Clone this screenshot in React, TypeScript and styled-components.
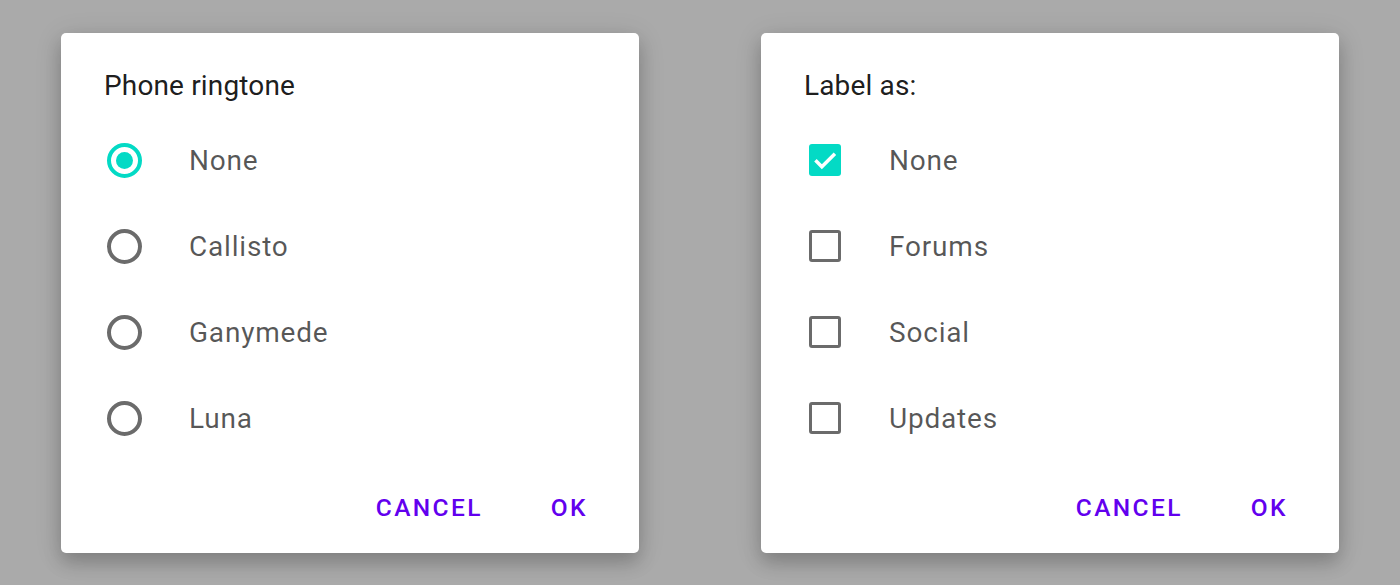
import React from "react";
import styled, { createGlobalStyle } from "styled-components";

const Global = createGlobalStyle`
  html, body { margin: 0; padding: 0; background: #aaaaaa; }
  body { font-family: Roboto, "Noto Sans", sans-serif; }
`;

const Page = styled.div`
  display: flex;
  gap: 122px;
  padding: 33px 61px;
  height: 585px;
  box-sizing: border-box;
`;

const Dialog = styled.div`
  width: 578px;
  height: 520px;
  box-sizing: border-box;
  background: #ffffff;
  border-radius: 5px;
  box-shadow: 0 10px 18px rgba(0, 0, 0, 0.18), 0 4px 28px rgba(0, 0, 0, 0.12);
  display: flex;
  flex-direction: column;
  padding: 36px 0 0 0;
`;

const Title = styled.div`
  font-size: 28px;
  line-height: 34px;
  color: rgba(0, 0, 0, 0.9);
  padding-left: 43px;
  letter-spacing: 0.15px;
`;

const List = styled.div`
  display: flex;
  flex-direction: column;
  margin-top: 14px;
`;

const Row = styled.div`
  display: flex;
  align-items: center;
  height: 86px;
`;

const Control = styled.div`
  width: 128px;
  display: flex;
  align-items: center;
  padding-left: 46px;
  box-sizing: border-box;
`;

const Radio = styled.div<{ $checked?: boolean }>`
  width: 35px;
  height: 35px;
  box-sizing: border-box;
  border-radius: 50%;
  border: 4px solid ${(p) => (p.$checked ? "#03dac5" : "#6b6b6b")};
  display: flex;
  align-items: center;
  justify-content: center;
  &::after {
    content: "";
    display: ${(p) => (p.$checked ? "block" : "none")};
    width: 17px;
    height: 17px;
    border-radius: 50%;
    background: #03dac5;
  }
`;

const Box = styled.div<{ $checked?: boolean }>`
  width: 32px;
  height: 32px;
  margin-left: 2px;
  box-sizing: border-box;
  border-radius: 3px;
  border: ${(p) => (p.$checked ? "none" : "3.5px solid #6b6b6b")};
  background: ${(p) => (p.$checked ? "#03dac5" : "transparent")};
  display: flex;
  align-items: center;
  justify-content: center;
`;

const Label = styled.div`
  font-size: 28px;
  color: rgba(0, 0, 0, 0.66);
  letter-spacing: 0.8px;
`;

const Actions = styled.div`
  margin-top: auto;
  display: flex;
  justify-content: flex-end;
  align-items: center;
  gap: 44px;
  padding: 0 39px 23px 0;
`;

const Button = styled.button`
  border: none;
  background: none;
  font-family: Roboto, "Noto Sans", sans-serif;
  font-weight: 500;
  font-size: 24.5px;
  letter-spacing: 2.4px;
  color: #6200ee;
  padding: 8px 12px;
  cursor: pointer;
`;

const Check = () => (
  <svg width="28" height="28" viewBox="0 0 24 24">
    <path d="M3.8 12.3 L9.3 17.8 L20.5 6.6" fill="none" stroke="#fff" strokeWidth="3" />
  </svg>
);

const ringtones = ["None", "Callisto", "Ganymede", "Luna"];
const labels = ["None", "Forums", "Social", "Updates"];

export default function App() {
  return (
    <>
      <Global />
      <Page>
        <Dialog>
          <Title>Phone ringtone</Title>
          <List>
            {ringtones.map((r, i) => (
              <Row key={r}>
                <Control>
                  <Radio $checked={i === 0} />
                </Control>
                <Label>{r}</Label>
              </Row>
            ))}
          </List>
          <Actions>
            <Button>CANCEL</Button>
            <Button>OK</Button>
          </Actions>
        </Dialog>
        <Dialog>
          <Title>Label as:</Title>
          <List>
            {labels.map((r, i) => (
              <Row key={r}>
                <Control>
                  <Box $checked={i === 0}>{i === 0 && <Check />}</Box>
                </Control>
                <Label>{r}</Label>
              </Row>
            ))}
          </List>
          <Actions>
            <Button>CANCEL</Button>
            <Button>OK</Button>
          </Actions>
        </Dialog>
      </Page>
    </>
  );
}
